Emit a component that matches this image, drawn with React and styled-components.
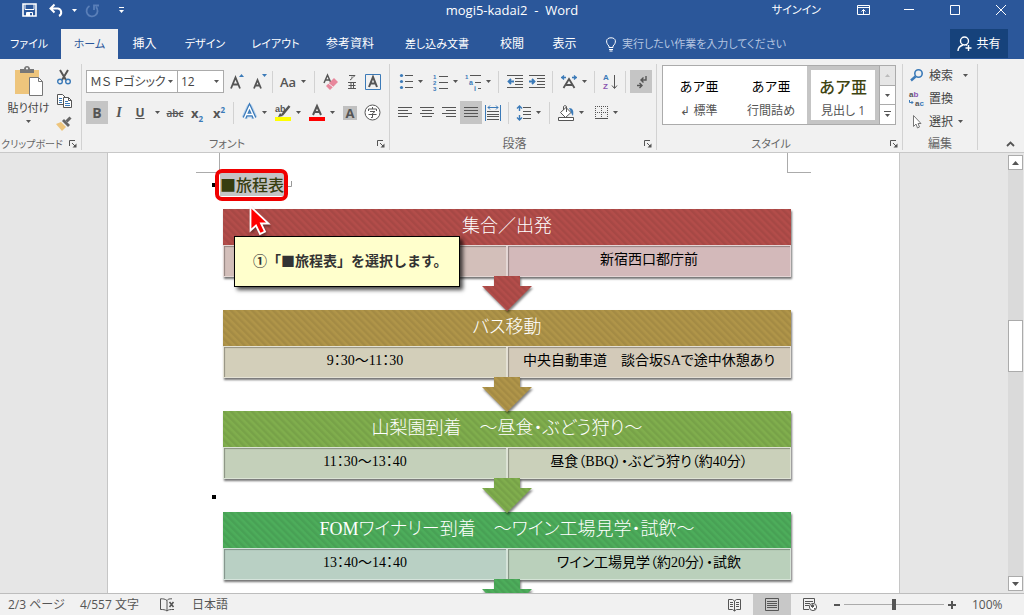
import React from "react";
import styled, { createGlobalStyle, css } from "styled-components";

const GlobalStyle = createGlobalStyle`
  *, *::before, *::after { box-sizing: border-box; }
  html, body { margin: 0; padding: 0; height: 100%; }
  body {
    font-family: "Open Sans", "Noto Sans CJK JP", sans-serif;
    font-size: 12px;
    line-height: 16px;
    font-feature-settings: "palt";
    color: #444;
    background: #f1f1f1;
  }
  button, select, input {
    font: inherit;
    font-feature-settings: inherit;
    color: inherit;
    margin: 0;
    padding: 0;
    border: 0;
    border-radius: 0;
    background: transparent;
  }
  svg { display: block; flex: none; overflow: visible; }
`;

const blue = "#2b579a";
const ink = "#555";
const accent = "#3b7ab8";

const Window = styled.div`
  display: flex;
  flex-direction: column;
  height: 100vh;
  overflow: hidden;
`;

/* ---------- title bar ---------- */
const TitleBar = styled.header`
  display: grid;
  grid-template-columns: 1fr auto 1fr;
  height: 29px;
  flex: none;
  background: ${blue};
  color: #fff;
`;
const QuickAccess = styled.div`
  display: flex;
  align-items: center;
  height: 20px;
  padding-left: 18px;
`;
const QuickButton = styled.button`
  display: flex;
  align-items: center;
  justify-content: center;
  width: ${(p) => p.$w}px;
  height: 20px;
  color: ${(p) => (p.$dim ? "#5a7fb8" : "#fff")};
`;
const DocTitle = styled.h1`
  margin: 0;
  padding-top: 2px;
  font-size: 13px;
  font-weight: 400;
  white-space: pre;
`;
const WindowControls = styled.div`
  display: flex;
  justify-content: flex-end;
  height: 20px;
`;
const SignIn = styled.button`
  padding: 0 19px 0 0;
  font-size: 11px;
`;
const WindowButton = styled.button`
  display: flex;
  align-items: center;
  justify-content: center;
  width: 46px;
  height: 19px;
`;

/* ---------- tabs ---------- */
const TabBar = styled.nav`
  display: flex;
  height: 30px;
  flex: none;
  background: ${blue};
  color: #fff;
`;
const Tab = styled.button`
  width: ${(p) => p.$w}px;
  height: 30px;
  font-size: ${(p) => (p.$kana ? 11 : 12)}px;
  white-space: nowrap;
  ${(p) => p.$file && css`padding-right: 3px;`}
  ${(p) => p.$active && css`background: #f1f1f1; color: ${blue};`}
`;
const TellMe = styled.label`
  display: flex;
  align-items: center;
  gap: 6px;
  flex: 1;
  padding-left: 15px;
`;
const TellInput = styled.input`
  flex: 1;
  min-width: 0;
  font-size: 11px;
  outline: none;
  &::placeholder { color: #b3c4e0; opacity: 1; }
`;
const Share = styled.button`
  display: flex;
  align-items: center;
  justify-content: center;
  gap: 4px;
  width: 58px;
  height: 29px;
  margin-right: 16px;
  background: #16427b;
`;

/* ---------- ribbon ---------- */
const Ribbon = styled.div`
  display: flex;
  height: 94px;
  flex: none;
  padding-top: 5px;
  background: #f1f1f1;
  border-bottom: 1px solid #c8c8c8;
`;
const Group = styled.section`
  display: flex;
  flex-direction: column;
  width: ${(p) => p.$w}px;
  height: 86px;
  flex: none;
  border-right: 1px solid #d2d2d2;
`;
const GroupBody = styled.div`
  display: flex;
  flex-direction: column;
  gap: 8px;
  flex: 1;
  padding: ${(p) => p.$pad || "6px 0 0 4px"};
`;
const GroupFoot = styled.footer`
  display: flex;
  align-items: center;
  height: 12px;
  flex: none;
  color: #666;
`;
const GroupName = styled.h2`
  flex: 1;
  margin: 0;
  font-size: ${(p) => p.$size || 12}px;
  font-weight: 400;
  text-align: center;
  white-space: nowrap;
`;
const Launcher = styled.button`
  display: flex;
  align-items: center;
  justify-content: center;
  width: 17px;
  height: 16px;
`;
const ToolRow = styled.div`
  display: flex;
  align-items: center;
  height: 23px;
`;
const Tool = styled.button`
  display: flex;
  align-items: center;
  justify-content: center;
  gap: 5px;
  width: ${(p) => p.$w || 22}px;
  height: 23px;
  flex: none;
  color: ${ink};
  background: ${(p) => (p.$on ? "#c5c5c5" : "transparent")};
`;
const Divider = styled.span`
  width: 1px;
  height: 22px;
  flex: none;
  margin: 0 ${(p) => p.$r || 4}px 0 ${(p) => p.$l || 4}px;
  background: #d2d2d2;
`;
const Combo = styled.label`
  display: flex;
  align-items: center;
  width: ${(p) => p.$w}px;
  height: 23px;
  flex: none;
  padding-right: 4px;
  border: 1px solid #ababab;
  background: #fff;
  & + & { margin-left: -1px; margin-right: 2px; }
`;
const ComboSelect = styled.select`
  appearance: none;
  flex: 1;
  min-width: 0;
  height: 21px;
  padding-left: 3px;
  color: #444;
  outline: none;
  white-space: nowrap;
`;
const Letter = styled.span`
  font-size: ${(p) => p.$size || 14}px;
  line-height: 20px;
  font-weight: ${(p) => (p.$bold ? 700 : 600)};
  font-style: ${(p) => (p.$italic ? "italic" : "normal")};
  font-family: ${(p) => (p.$italic ? '"Liberation Serif", serif' : "inherit")};
  text-decoration: ${(p) => p.$line || "none"};
  sub, sup { font-size: 8px; line-height: 0; color: ${accent}; }
`;
const ShadedLetter = styled.span`
  width: 14px;
  height: 14px;
  background: #c0c0c0;
  font-size: 13px;
  line-height: 14px;
  font-weight: 700;
`;

const Clip = styled.div`
  display: flex;
  gap: 4px;
  flex: 1;
  padding: 2px 0 0 7px;
`;
const Paste = styled.button`
  display: flex;
  flex-direction: column;
  align-items: center;
  gap: 4px;
  width: 43px;
  height: 60px;
  font-size: 11px;
  white-space: nowrap;
`;
const ClipTools = styled.div`
  display: flex;
  flex-direction: column;
  width: 20px;
`;

const Gallery = styled.div`
  display: flex;
  height: 60px;
  border: 1px solid #ababab;
  background: #fff;
`;
const StyleItem = styled.button`
  display: flex;
  flex-direction: column;
  align-items: center;
  gap: 6px;
  width: 72px;
  height: 58px;
  padding-top: ${(p) => (p.$on ? 6 : 10)}px;
  border: ${(p) => (p.$on ? "4px solid #c5c5c5" : "0")};
  white-space: nowrap;
`;
const Preview = styled.span`
  font-family: "Noto Sans CJK JP", sans-serif;
  font-size: ${(p) => (p.$big ? 16 : 13)}px;
  line-height: 20px;
  font-weight: ${(p) => (p.$big ? 500 : 400)};
  font-feature-settings: normal;
  color: ${(p) => (p.$big ? "#3f4411" : "#000")};
`;
const StyleName = styled.span`
  line-height: 18px;
  color: #555;
`;
const GalleryScroll = styled.div`
  display: flex;
  flex-direction: column;
  width: 16px;
  margin-left: auto;
  border-left: 1px solid #ababab;
`;
const ScrollStep = styled.button`
  display: flex;
  flex: 1;
  align-items: center;
  justify-content: center;
  background: ${(p) => (p.disabled ? "#e6e6e6" : "#fff")};
  & + & { border-top: 1px solid #ababab; }
`;
const EditList = styled.div`
  display: flex;
  flex-direction: column;
  flex: 1;
  padding-left: 6px;
`;
const EditButton = styled.button`
  display: flex;
  align-items: center;
  gap: 5px;
  height: 23px;
`;
const CaretSpace = styled.span`
  padding-left: ${(p) => p.$gap}px;
`;
const Collapse = styled.button`
  align-self: flex-end;
  margin: 0 9px 5px auto;
`;

/* ---------- document ---------- */
const Workspace = styled.div`
  display: flex;
  flex: 1;
  min-height: 0;
  background: #e6e6e6;
`;
const Canvas = styled.main`
  flex: 1;
  min-width: 0;
  overflow: hidden;
`;
const Page = styled.article`
  position: relative;
  width: 793px;
  max-width: 100%;
  min-height: 100%;
  margin: 0 auto;
  padding: 0 88px;
  background: #fff;
  border: solid #c6c6c6;
  border-width: 0 1px;
`;
const CropRow = styled.div`
  display: flex;
  justify-content: space-between;
  height: 20px;
`;
const Crop = styled.span`
  width: 24px;
  border: solid #ababab;
  border-width: 0 0 1px 0;
  ${(p) => (p.$right ? css`border-left-width: 1px;` : css`border-right-width: 1px;`)}
`;
const HeadingLine = styled.h3`
  display: flex;
  align-items: center;
  height: 36px;
  margin: 0;
  padding: 0 0 14px 24px;
  font-family: "Noto Sans CJK JP", sans-serif;
  font-feature-settings: normal;
  font-size: 16px;
  line-height: 24px;
  font-weight: 500;
  color: #363d10;
`;
const Selected = styled.span`
  padding-right: 2px;
  background: #c5c5c5;
`;
const Mark = styled.span`
  position: absolute;
  left: 104px;
  top: ${(p) => p.$top}px;
  width: 4px;
  height: 4px;
  background: #000;
`;
const HighlightBox = styled.div`
  position: absolute;
  left: 107px;
  top: 16px;
  width: 73px;
  height: 32px;
  border: 4px solid #f00000;
  border-radius: 7px;
`;
const Pointer = styled.div`
  position: absolute;
  z-index: 4;
  left: 141px;
  top: 52px;
  filter: drop-shadow(1px 2px 1px rgba(0, 0, 0, 0.35));
`;
const Callout = styled.p`
  position: absolute;
  z-index: 3;
  left: 126px;
  top: 83px;
  margin: 0;
  padding: 11px 11px 14px 18px;
  border: 1px solid #000;
  background: #ffffcc;
  box-shadow: 3px 3px 4px rgba(0, 0, 0, 0.7);
  font-family: "Noto Sans CJK JP", sans-serif;
  font-feature-settings: normal;
  font-size: 14px;
  line-height: 24px;
  font-weight: 700;
  color: #333;
  white-space: nowrap;
`;

const stripes = css`
  background-color: ${(p) => p.$color};
  background-image: repeating-linear-gradient(
    45deg,
    rgba(0, 0, 0, 0.07) 0 1px,
    rgba(0, 0, 0, 0) 3px 4px,
    rgba(0, 0, 0, 0.07) 5px
  );
`;
const Flow = styled.ol`
  list-style: none;
  margin: 0;
  padding: 0 20px 0 27px;
  font-family: "Liberation Serif", "Noto Sans CJK JP", serif;
`;
const Step = styled.li`
  display: flex;
  flex-direction: column;
  align-items: center;
`;
const Card = styled.div`
  align-self: stretch;
  box-shadow: 1px 2px 2px rgba(0, 0, 0, 0.55);
`;
const StepTitle = styled.h4`
  ${stripes}
  margin: 0;
  height: 36px;
  font-size: 18px;
  line-height: 34px;
  font-weight: 300;
  color: #fff;
  text-align: center;
  white-space: nowrap;
`;
const Cells = styled.div`
  display: grid;
  grid-template-columns: 1fr 1fr;
  height: 32px;
`;
const Cell = styled.div`
  background: ${(p) => p.$color};
  border: 1px solid rgba(255, 255, 255, 0.4);
  box-shadow: inset 1px 1px 1px rgba(0, 0, 0, 0.3);
  font-size: 14px;
  line-height: 28px;
  color: #000;
  text-align: center;
  white-space: nowrap;
`;
const ArrowWrap = styled.div`
  position: relative;
  z-index: 1;
  height: 33px;
  margin-top: -1px;
  margin-bottom: 1px;
  filter: drop-shadow(1px 2px 1px rgba(0, 0, 0, 0.5));
`;
const Arrow = styled.div`
  ${stripes}
  width: 50px;
  height: 35px;
  clip-path: polygon(12px 0, 38px 0, 38px 10px, 50px 10px, 25px 35px, 0 10px, 12px 10px);
`;

const ScrollBar = styled.div`
  display: flex;
  flex-direction: column;
  width: 17px;
  flex: none;
  padding: 2px 1px;
`;
const ScrollButton = styled.button`
  display: flex;
  align-items: center;
  justify-content: center;
  height: 15px;
  border: 1px solid #ababab;
  background: #fff;
`;
const Track = styled.div`
  display: flex;
  flex-direction: column;
  flex: 1;
  background: #dadada;
`;
const Before = styled.span`
  flex: 150;
`;
const After = styled.span`
  flex: 204;
`;
const Thumb = styled.span`
  height: 52px;
  border: 1px solid #ababab;
  background: #fff;
`;

/* ---------- status bar ---------- */
const StatusBar = styled.footer`
  display: flex;
  align-items: center;
  height: 22px;
  flex: none;
  padding: 0 19px 0 8px;
  border-top: 1px solid #bdbdbd;
  background: #f1f1f1;
  color: #555;
  white-space: nowrap;
`;
const StatusItem = styled.span`
  width: ${(p) => p.$w}px;
`;
const Spacer = styled.span`
  flex: 1;
`;
const ViewButton = styled.button`
  display: flex;
  align-items: center;
  justify-content: center;
  width: 38px;
  height: 21px;
  background: ${(p) => (p.$on ? "#c8c8c8" : "transparent")};
`;
const ZoomButton = styled.button`
  display: flex;
  align-items: center;
  justify-content: center;
  width: 15px;
  height: 21px;
`;
const ZoomRange = styled.input`
  appearance: none;
  width: 100px;
  height: 21px;
  background: linear-gradient(#ababab, #ababab) center / 100% 1px no-repeat;
  &::-webkit-slider-thumb {
    appearance: none;
    width: 4px;
    height: 11px;
    background: #555;
  }
`;
const ZoomValue = styled.output`
  padding-left: 13px;
  width: 46px;
`;

/* ---------- drawings ---------- */
const Caret = ({ color = ink }) => (
  <svg width="5" height="3" viewBox="0 0 5 3"><path d="M0 0h5L2.5 3z" fill={color} /></svg>
);
const Draw = ({ w = 18, h = 18, children, stroke = ink }) => (
  <svg width={w} height={h} viewBox={`0 0 ${w} ${h}`} fill="none" stroke={stroke}>{children}</svg>
);
const Lines = ({ rows }) => (
  <Draw w={14} h={13}>
    {rows.map(([x, w], i) => <path key={i} d={`M${x} ${1.5 + i * 3}h${w}`} />)}
  </Draw>
);
const Tiny = ({ x, y, size, fill = accent, children }) => (
  <text x={x} y={y} fontSize={size} fontFamily="Liberation Sans" fontWeight="700" fill={fill} stroke="none">{children}</text>
);
const LaunchIcon = () => (
  <Draw w={8} h={8}><path d="M.5 6V.5H6M3 3l3 3" /><path d="M7.500 3.500v4h-4z" fill={ink} stroke="none" /></Draw>
);

function Launch({ label }) {
  return <Launcher aria-label={label}><LaunchIcon /></Launcher>;
}

function ClipboardGroup() {
  return (
    <Group $w={82}>
      <Clip>
        <Paste>
          <Draw w={28} h={30}>
            <path d="M0 4h24v24H0z" fill="#eec57c" stroke="none" />
            <path d="M5 7V3h4c0-4 6-4 6 0h4v4z" fill="#777" stroke="none" />
            <circle cx="12" cy="2.500" r="1" fill="#fff" stroke="none" />
            <path d="M14.500 11.500h9l4 4v14h-13z" fill="#fff" stroke="#777" />
            <path d="M23.500 11.500v4h4" stroke="#777" />
          </Draw>
          <span>貼り付け</span>
          <Caret />
        </Paste>
        <ClipTools>
          <Tool $w={20} aria-label="切り取り">
            <Draw w={14} h={15}>
              <path d="M3 0l6 10M11 0L5 10" strokeWidth="2" />
              <circle cx="3" cy="11.500" r="2.300" stroke={accent} strokeWidth="1.400" />
              <circle cx="11" cy="11.500" r="2.300" stroke={accent} strokeWidth="1.400" />
            </Draw>
          </Tool>
          <Tool $w={20} aria-label="コピー">
            <Draw w={15} h={14}>
              <path d="M.5.5h5l3 3v7h-8z" fill="#fff" />
              <path d="M2 4.500h3M2 6.500h3M2 8.500h3" stroke={accent} />
              <path d="M6.500 3.500h5l3 3v7h-8z" fill="#fff" />
              <path d="M11.500 3.500v3h3" />
              <path d="M8 7.500h3M8 9.500h5M8 11.500h5" stroke={accent} />
            </Draw>
          </Tool>
          <Tool $w={20} aria-label="書式のコピー">
            <Draw w={16} h={14}>
              <path d="M0 7l5-2 5 5-4 4z" fill="#eec57c" stroke="none" />
              <path d="M6 4l2-2 6 6-2 2z" fill="#666" stroke="none" />
              <path d="M10.500 4.500L14.500.5" strokeWidth="3" stroke="#666" />
            </Draw>
          </Tool>
        </ClipTools>
      </Clip>
      <GroupFoot><GroupName $size={10}>クリップボード</GroupName><Launch label="クリップボードの設定" /></GroupFoot>
    </Group>
  );
}

function FontGroup() {
  return (
    <Group $w={308}>
      <GroupBody>
        <ToolRow>
          <Combo $w={92}>
            <ComboSelect aria-label="フォント"><option>ＭＳ Ｐゴシック</option></ComboSelect><Caret />
          </Combo>
          <Combo $w={47}>
            <ComboSelect aria-label="フォント サイズ"><option>12</option></ComboSelect><Caret />
          </Combo>
          <Tool aria-label="フォント サイズの拡大">
            <Draw w={14} h={16}>
              <path d="M1 14.500L5.500 3.500 10 14.500M2.500 10.500h6" strokeWidth="1.800" />
              <path d="M9 3h5l-2.500-3z" fill={accent} stroke="none" />
            </Draw>
          </Tool>
          <Tool $w={23} aria-label="フォント サイズの縮小">
            <Draw w={14} h={16}>
              <path d="M1 14.500L4.500 6 8 14.500M2.500 11.500h4" strokeWidth="1.800" />
              <path d="M9 0h5l-2.500 3z" fill={accent} stroke="none" />
            </Draw>
          </Tool>
          <Divider $l={1} $r={3} />
          <Tool $w={34} aria-label="文字種の変換"><Letter $size={13}>Aa</Letter><Caret /></Tool>
          <Divider $l={4} $r={5} />
          <Tool aria-label="書式のクリア">
            <Draw w={16} h={16}>
              <path d="M1 9L4.500 1 8 9M2.500 6h4" strokeWidth="1.500" />
              <path d="M3 12l8-8 4 4-8 8z" fill="#e8879c" stroke="none" />
              <path d="M5 9l5 4" stroke="#f1f1f1" />
            </Draw>
          </Tool>
          <Tool $w={20} aria-label="ルビ">
            <Draw w={9} h={16}>
              <path d="M1 1.500h6L5 3.500M4 2.500v2L2 6M0 8.500h8M0 14.500h8M3 8v6M5.500 8v6M.5 11.500h7" />
            </Draw>
          </Tool>
          <Tool $w={22} aria-label="囲み線">
            <Draw w={16} h={16}>
              <path d="M.5.5h15v15H.5z" stroke={accent} />
              <path d="M4 13L8 3l4 10M5 9.500h6" strokeWidth="2" />
            </Draw>
          </Tool>
        </ToolRow>
        <ToolRow>
          <Tool $on aria-label="太字"><Letter $bold>B</Letter></Tool>
          <Tool aria-label="斜体"><Letter $italic $bold>I</Letter></Tool>
          <Tool $w={20} aria-label="下線"><Letter $bold $line="underline" $size={12}>U</Letter></Tool>
          <Tool $w={14} aria-label="下線の種類"><Caret /></Tool>
          <Tool aria-label="取り消し線"><Letter $size={10} $line="line-through">abc</Letter></Tool>
          <Tool aria-label="下付き"><Letter $size={13} $bold>x<sub>2</sub></Letter></Tool>
          <Tool aria-label="上付き"><Letter $size={13} $bold>x<sup>2</sup></Letter></Tool>
          <Divider $l={3} $r={3} />
          <Tool $w={34} aria-label="文字の効果">
            <Draw w={15} h={15}>
              <path d="M2.500 13L7.500 2l5 11M4.500 9.500h6" stroke="#b9d3ee" strokeWidth="6" strokeLinejoin="round" />
              <path d="M2.500 13L7.500 2l5 11M4.500 9.500h6" stroke={accent} strokeWidth="4" />
              <path d="M2.500 13L7.500 2l5 11M4.500 9.500h6" stroke="#fff" strokeWidth="1.500" />
            </Draw>
            <Caret />
          </Tool>
          <Tool $w={34} aria-label="蛍光ペンの色">
            <Draw w={16} h={16}>
              <Tiny x={0} y={7} size={9} fill={ink}>ab</Tiny>
              <path d="M14.500 1L7 10" strokeWidth="2.500" />
              <path d="M3 12l2-4 3 3z" fill={ink} stroke="none" />
              <path d="M0 12h16v4H0z" fill="#ff0" stroke="none" />
            </Draw>
            <Caret />
          </Tool>
          <Tool $w={34} aria-label="フォントの色">
            <Draw w={16} h={16}>
              <path d="M4 10L8 1l4 9M5 7h6" strokeWidth="2" />
              <path d="M0 12h16v4H0z" fill="#f00" stroke="none" />
            </Draw>
            <Caret />
          </Tool>
          <Tool aria-label="文字の網かけ"><ShadedLetter>A</ShadedLetter></Tool>
          <Tool aria-label="囲い文字">
            <Draw w={17} h={17}>
              <circle cx="8.500" cy="8.500" r="7.500" fill="#fff" />
              <path d="M8.500 3v2M4.500 7V5h8v2M6 7.500h5L8.500 9.500v4H7M4.500 10.500h8" />
            </Draw>
          </Tool>
        </ToolRow>
      </GroupBody>
      <GroupFoot><GroupName $size={11}>フォント</GroupName><Launch label="フォントの設定" /></GroupFoot>
    </Group>
  );
}

function ParagraphGroup() {
  return (
    <Group $w={267}>
      <GroupBody>
        <ToolRow>
          <Tool $w={34} aria-label="箇条書き">
            <Draw w={13} h={15}>
              {[1.5, 7.5, 13.5].map((y) => (
                <g key={y}><circle cx="1.500" cy={y} r="1.600" fill={accent} stroke="none" /><path d={`M5 ${y}h8`} /></g>
              ))}
            </Draw>
            <Caret />
          </Tool>
          <Tool $w={34} aria-label="段落番号">
            <Draw w={15} h={16}>
              {[1, 2, 3].map((n) => (
                <g key={n}>
                  <Tiny x={0} y={n * 6 - 1} size={6}>{n}</Tiny>
                  <path d={`M6 ${n * 6 - 3.5}h9`} />
                </g>
              ))}
            </Draw>
            <Caret />
          </Tool>
          <Tool $w={32} aria-label="アウトライン">
            <Draw w={16} h={16}>
              <Tiny x={0} y={5} size={6}>1</Tiny>
              <Tiny x={4} y={11} size={7}>a</Tiny>
              <Tiny x={9} y={17} size={7}>i</Tiny>
              <path d="M5 1.500h11M10 8.500h6M13 14.500h3" />
            </Draw>
            <Caret />
          </Tool>
          <Divider $l={4} $r={5} />
          <Tool aria-label="インデントを減らす">
            <Draw w={16} h={14}>
              <path d="M0 .5h16M8 3.500h8M8 6.500h8M8 9.500h8M0 12.500h16" />
              <path d="M1 6.500h6M4 4L1.500 6.500 4 9" stroke={accent} strokeWidth="1.800" />
            </Draw>
          </Tool>
          <Tool aria-label="インデントを増やす">
            <Draw w={16} h={14}>
              <path d="M0 .5h16M8 3.500h8M8 6.500h8M8 9.500h8M0 12.500h16" />
              <path d="M0 6.500h6M3 4l2.500 2.500L3 9" stroke={accent} strokeWidth="1.800" />
            </Draw>
          </Tool>
          <Divider $l={4} $r={5} />
          <Tool $w={32} aria-label="拡張書式">
            <Draw w={16} h={14}>
              <path d="M2.500 13L8 4l5.500 9M5 10h6" strokeWidth="1.800" />
              <path d="M0 2.500h5M3 .5L1 2.500l2 2M11 2.500h5M13 .5l2 2-2 2" stroke={accent} strokeWidth="1.400" />
            </Draw>
            <Caret />
          </Tool>
          <Divider $l={4} $r={4} />
          <Tool aria-label="並べ替え">
            <Draw w={14} h={16}>
              <Tiny x={0} y={6} size={8}>A</Tiny>
              <Tiny x={0} y={15} size={8} fill="#8a55b0">Z</Tiny>
              <path d="M11.500 1v13M9 11.500l2.500 3 2.500-3" />
            </Draw>
          </Tool>
          <Divider $l={4} $r={4} />
          <Tool $on aria-label="編集記号の表示">
            <Draw w={11} h={14}>
              <path d="M10 1v4H5M7.500 2.500L5 5l2.500 2.500M1 10.500h5M3.500 8L6 10.500 3.500 13" strokeWidth="1.400" />
            </Draw>
          </Tool>
        </ToolRow>
        <ToolRow>
          <Tool aria-label="左揃え"><Lines rows={[[0, 14], [0, 10], [0, 14], [0, 10]]} /></Tool>
          <Tool aria-label="中央揃え"><Lines rows={[[0, 14], [2, 10], [0, 14], [2, 10]]} /></Tool>
          <Tool aria-label="右揃え"><Lines rows={[[0, 14], [4, 10], [0, 14], [4, 10]]} /></Tool>
          <Tool $on aria-label="両端揃え"><Lines rows={[[0, 14], [0, 14], [0, 14], [0, 14]]} /></Tool>
          <Tool aria-label="均等割り付け">
            <Draw w={16} h={16}>
              <path d="M.5 0v16M15.500 0v16M3 2.500h10M5 .5l-2 2 2 2M11 .5l2 2-2 2" stroke={accent} />
              <path d="M2 6.500h12M2 9.500h12M2 11.500h12M2 14.500h12" />
            </Draw>
          </Tool>
          <Divider $l={4} $r={4} />
          <Tool $w={32} aria-label="行と段落の間隔">
            <Draw w={14} h={16}>
              <path d="M2.500 1v5M2.500 10v5M0 3.500L2.500 1 5 3.500M0 12.500L2.500 15 5 12.500" stroke={accent} strokeWidth="1.400" />
              <path d="M6 2.500h8M6 6.500h8M6 9.500h8M6 13.500h8" />
            </Draw>
            <Caret />
          </Tool>
          <Divider $l={4} $r={5} />
          <Tool $w={32} aria-label="塗りつぶし">
            <Draw w={16} h={16}>
              <path d="M8 2.500l5 5-5.500 5-5-5z" fill="#fff" /><path d="M5.500 5V1.500c1-1.500 3-1 3 .5V7" />
              <path d="M11 3c4 0 5 3 4 8-2-2-2-5-4-8z" fill={accent} stroke="none" />
              <path d="M.5 12.500h15v3H.5z" fill="#fff" />
            </Draw>
            <Caret />
          </Tool>
          <Tool $w={38} aria-label="罫線">
            <Draw w={13} h={14}>
              <path d="M.5 0v12M6.500 0v12M12.500 0v12M0 .5h13M0 6.500h13" strokeDasharray="1 1" /><path d="M0 12.500h13" />
            </Draw>
            <Caret />
          </Tool>
        </ToolRow>
      </GroupBody>
      <GroupFoot><GroupName>段落</GroupName><Launch label="段落の設定" /></GroupFoot>
    </Group>
  );
}

function StylesGroup() {
  return (
    <Group $w={246}>
      <GroupBody $pad="1px 6px 0 5px">
        <Gallery>
          <StyleItem><Preview>あア亜</Preview><StyleName>↲ 標準</StyleName></StyleItem>
          <StyleItem><Preview>あア亜</Preview><StyleName>行間詰め</StyleName></StyleItem>
          <StyleItem $on><Preview $big>あア亜</Preview><StyleName>見出し 1</StyleName></StyleItem>
          <GalleryScroll>
            <ScrollStep disabled aria-label="前の行"><Draw w={5} h={3}><path d="M0 3h5L2.500 0z" fill="#bbb" stroke="none" /></Draw></ScrollStep>
            <ScrollStep aria-label="次の行"><Caret /></ScrollStep>
            <ScrollStep aria-label="その他"><Draw w={7} h={7}><path d="M0 .5h7" /><path d="M1 3h5L3.500 6z" fill={ink} stroke="none" /></Draw></ScrollStep>
          </GalleryScroll>
        </Gallery>
      </GroupBody>
      <GroupFoot><GroupName $size={11}>スタイル</GroupName><Launch label="スタイルの設定" /></GroupFoot>
    </Group>
  );
}

function EditGroup() {
  return (
    <Group $w={75}>
      <EditList>
        <EditButton>
          <Draw w={15} h={13}>
            <circle cx="9.500" cy="4.500" r="3.700" stroke={accent} strokeWidth="1.600" />
            <path d="M6.500 7.500L2 11.500" stroke={accent} strokeWidth="2.400" />
          </Draw>
          検索<CaretSpace $gap={5}><Caret /></CaretSpace>
        </EditButton>
        <EditButton>
          <Draw w={15} h={16}>
            <Tiny x={0} y={6} size={8} fill={ink}>a<tspan fill="#8a55b0">b</tspan></Tiny>
            <Tiny x={6} y={15} size={8} fill={ink}>a<tspan fill={accent}>c</tspan></Tiny>
            <path d="M.5 9v2.500H4M2.500 10L4 11.500 2.500 13" stroke={accent} />
          </Draw>
          置換
        </EditButton>
        <EditButton>
          <Draw w={15} h={14}><path d="M4.500.5v11l2.500-2.500 1.500 4 2-1-1.500-3.500h3z" fill="#fff" stroke="#777" /></Draw>
          選択<Caret />
        </EditButton>
      </EditList>
      <GroupFoot><GroupName>編集</GroupName></GroupFoot>
    </Group>
  );
}

const tabs = [
  { name: "ファイル", w: 61, kana: true, file: true },
  { name: "ホーム", w: 57, kana: true, active: true },
  { name: "挿入", w: 53 },
  { name: "デザイン", w: 68, kana: true },
  { name: "レイアウト", w: 73, kana: true },
  { name: "参考資料", w: 76 },
  { name: "差し込み文書", w: 98, kana: true },
  { name: "校閲", w: 52 },
  { name: "表示", w: 53 },
];

const steps = [
  { title: "集合／出発", color: "#b34d4a", cells: [["", "#d3bfba"], ["新宿西口都庁前", "#d3b9ba"]] },
  { title: "バス移動", color: "#b09549", cells: [["9：30～11：30", "#d3cfba"], ["中央自動車道　談合坂SAで途中休憩あり", "#d3cab9"]] },
  { title: "山梨園到着　～昼食・ぶどう狩り～", color: "#80ae4d", cells: [["11：30～13：40", "#c4d0ba"], ["昼食（BBQ）・ぶどう狩り（約40分）", "#cad0ba"]] },
  { title: "FOMワイナリー到着　～ワイン工場見学・試飲～", color: "#4dad5b", cells: [["13：40～14：40", "#b9d0c4"], ["ワイン工場見学（約20分）・試飲", "#bad0bb"]] },
];

export default function App() {
  return (
    <Window>
      <GlobalStyle />
      <TitleBar>
        <QuickAccess>
          <QuickButton $w={22} aria-label="上書き保存">
            <Draw w={15} h={14} stroke="currentColor">
              <path d="M1 1h13v12H1z" strokeWidth="1.600" /><path d="M3 1v5.500h9V1M4.500 13V9.500h6V13" /><path d="M5 10h3v3H5z" fill="currentColor" stroke="none" />
            </Draw>
          </QuickButton>
          <QuickButton $w={32} aria-label="元に戻す">
            <Draw w={14} h={13} stroke="currentColor"><path d="M1.500 4.500H9a4 4 0 0 1 1 7.500M5.500.5l-4 4 4 4" strokeWidth="2" /></Draw>
          </QuickButton>
          <Caret color="#fff" />
          <QuickButton $w={30} $dim aria-label="繰り返し">
            <Draw w={13} h={13} stroke="currentColor"><path d="M3.500 2A5.500 5.500 0 1 0 10 3M8 6V1.500h5" strokeWidth="1.800" /></Draw>
          </QuickButton>
          <QuickButton $w={28} aria-label="クイック アクセスのカスタマイズ">
            <Draw w={5} h={6} stroke="currentColor"><path d="M0 .5h5" /><path d="M0 3h5L2.500 6z" fill="currentColor" stroke="none" /></Draw>
          </QuickButton>
        </QuickAccess>
        <DocTitle>mogi5-kadai2  -  Word</DocTitle>
        <WindowControls>
          <SignIn>サインイン</SignIn>
          <WindowButton aria-label="リボンの表示オプション">
            <Draw w={13} h={10} stroke="#fff"><path d="M.5.5h12v9H.5zM.5 2.500h12M6.500 9V4.500M4.500 6.500l2-2 2 2" /></Draw>
          </WindowButton>
          <WindowButton aria-label="最小化"><Draw w={10} h={2} stroke="#fff"><path d="M0 .5h10" /></Draw></WindowButton>
          <WindowButton aria-label="最大化"><Draw w={10} h={10} stroke="#fff"><path d="M.5.5h9v9h-9z" /></Draw></WindowButton>
          <WindowButton aria-label="閉じる"><Draw w={10} h={10} stroke="#fff"><path d="M0 0l10 10M10 0L0 10" /></Draw></WindowButton>
        </WindowControls>
      </TitleBar>
      <TabBar>
        {tabs.map((t) => (
          <Tab key={t.name} $w={t.w} $kana={t.kana} $file={t.file} $active={t.active}>{t.name}</Tab>
        ))}
        <TellMe>
          <Draw w={10} h={15} stroke="#fff">
            <path d="M3 10.500V9C-.5 6-.5.8 5 .8S10.500 6 7 9v1.500z" /><path d="M3 12.500h4M3.500 14h3" />
          </Draw>
          <TellInput aria-label="操作アシスト" placeholder="実行したい作業を入力してください" />
        </TellMe>
        <Share>
          <Draw w={15} h={15} stroke="#fff">
            <circle cx="7.500" cy="5" r="4" strokeWidth="1.400" /><path d="M1 15c0-3 2-5 5-6M9 8.500l1 1M11.500 9v6M8.500 12h6" strokeWidth="1.400" />
          </Draw>
          共有
        </Share>
      </TabBar>
      <Ribbon>
        <ClipboardGroup />
        <FontGroup />
        <ParagraphGroup />
        <StylesGroup />
        <EditGroup />
        <Collapse aria-label="リボンを折りたたむ"><Draw w={9} h={6}><path d="M1 5l3.500-3.500L8 5" strokeWidth="1.800" /></Draw></Collapse>
      </Ribbon>
      <Workspace>
        <Canvas>
          <Page>
            <CropRow><Crop /><Crop $right /></CropRow>
            <HeadingLine>
              <Selected>■旅程表</Selected>
              <Draw w={7} h={7} stroke="#999"><path d="M5.500 0v5.500H2" /></Draw>
            </HeadingLine>
            <Flow>
              {steps.map((s) => (
                <Step key={s.title}>
                  <Card>
                    <StepTitle $color={s.color}>{s.title}</StepTitle>
                    <Cells>{s.cells.map(([text, color], i) => <Cell key={i} $color={color}>{text}</Cell>)}</Cells>
                  </Card>
                  <ArrowWrap><Arrow $color={s.color} /></ArrowWrap>
                </Step>
              ))}
            </Flow>
            <Mark $top={30} />
            <Mark $top={342} />
            <HighlightBox />
            <Callout>①「■旅程表」を選択します。</Callout>
            <Pointer>
              <Draw w={22} h={30} stroke="#fff">
                <path d="M1.500 1.500v24l5.500-5 4 8.500 5-2.500-4-8h7.500z" fill="#f00" strokeWidth="1.800" />
              </Draw>
            </Pointer>
          </Page>
        </Canvas>
        <ScrollBar>
          <ScrollButton aria-label="上へ"><Draw w={7} h={4}><path d="M0 4h7L3.500 0z" fill={ink} stroke="none" /></Draw></ScrollButton>
          <Track><Before /><Thumb /><After /></Track>
          <ScrollButton aria-label="下へ"><Draw w={7} h={4}><path d="M0 0h7L3.500 4z" fill={ink} stroke="none" /></Draw></ScrollButton>
        </ScrollBar>
      </Workspace>
      <StatusBar>
        <StatusItem $w={72}>2/3 ページ</StatusItem>
        <StatusItem $w={80}>4/557 文字</StatusItem>
        <StatusItem $w={32}>
          <Draw w={15} h={13}>
            <path d="M7 2.500C5 .8 3 .8.500.8v10.700c2.500 0 4.500 0 6.500 1.500V2.500C8 1 9 .8 12 .8M7 13c1.500-1.500 3-1.500 7-1.500" /><path d="M9.500 4l4 5M13.500 4l-4 5" strokeWidth="1.600" />
          </Draw>
        </StatusItem>
        <span>日本語</span>
        <Spacer />
        <ViewButton aria-label="閲覧モード">
          <Draw w={13} h={12}><path d="M6.500 2v10M.5.5h4l2 1.500 2-1.500h4v10h-4l-2 1.500-2-1.500h-4zM2 3.500h3M2 5.500h3M2 7.500h3M8 3.500h3M8 5.500h3M8 7.500h3" /></Draw>
        </ViewButton>
        <ViewButton $on aria-label="印刷レイアウト">
          <Draw w={14} h={13}><path d="M.5.5h13v12H.5zM2 3.500h10M2 5.500h10M2 7.500h10M2 9.500h10" /></Draw>
        </ViewButton>
        <ViewButton aria-label="Web レイアウト">
          <Draw w={14} h={13}>
            <path d="M6 11.500H.5V.5h11V5M2 3.500h8M2 5.500h5M2 7.500h4" />
            <circle cx="10" cy="9" r="3.600" fill="#fff" /><path d="M8 8l2-1.500 1 1.500-1.500 1.500zM11 11l1-1v1z" fill={ink} />
          </Draw>
        </ViewButton>
        <ZoomButton aria-label="縮小"><Draw w={6} h={2}><path d="M0 1h6" strokeWidth="2" /></Draw></ZoomButton>
        <ZoomRange type="range" min="0" max="100" defaultValue="50" aria-label="ズーム" />
        <ZoomButton aria-label="拡大"><Draw w={8} h={8}><path d="M0 4h8M4 0v8" strokeWidth="2" /></Draw></ZoomButton>
        <ZoomValue>100%</ZoomValue>
      </StatusBar>
    </Window>
  );
}
